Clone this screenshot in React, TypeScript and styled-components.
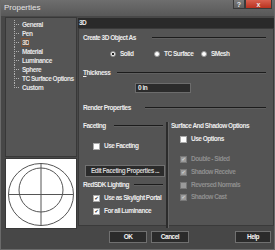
import React from 'react';
import styled, { createGlobalStyle } from 'styled-components';

const GlobalStyle = createGlobalStyle`
  html, body {
    margin: 0;
    padding: 0;
    background: #474747;
  }
  body {
    font-family: "Liberation Sans", Arial, sans-serif;
  }
  * { box-sizing: border-box; }
`;

const treeItems = [
  'General',
  'Pen',
  '3D',
  'Material',
  'Luminance',
  'Sphere',
  'TC Surface Options',
  'Custom',
];

const shadowOptions = [
  { label: 'Double - Sided', checked: true, top: 12 },
  { label: 'Shadow Receive', checked: true, top: 5 },
  { label: 'Reversed Normals', checked: false, top: 5 },
  { label: 'Shadow Cast', checked: true, top: 4 },
];

function App() {
  return (
    <Window>
      <GlobalStyle />
      <TitleBar>
        <TitleText>Properties</TitleText>
        <CaptionButtons>
          <CaptionButton>?</CaptionButton>
          <CaptionButton $close>x</CaptionButton>
        </CaptionButtons>
      </TitleBar>

      <Body>
        <Sidebar>
          <TreePanel>
            <TreeList>
              {treeItems.map((item, i) => (
                <TreeItem key={item} $last={i === treeItems.length - 1}>
                  <TreeLabel $selected={item === '3D'}>{item}</TreeLabel>
                </TreeItem>
              ))}
            </TreeList>
          </TreePanel>
          <Preview>
            <svg width="70" height="70" viewBox="0 0 70 70">
              <g fill="none" stroke="#555" strokeWidth="1">
                <ellipse cx="35" cy="35.5" rx="32.5" ry="31" />
                <ellipse cx="35" cy="31" rx="22" ry="22" />
                <line x1="35" y1="4" x2="35" y2="67" />
                <line x1="2.5" y1="35.5" x2="67.5" y2="35.5" />
              </g>
            </svg>
          </Preview>
        </Sidebar>

        <Main>
          <PageHeader>3D</PageHeader>
          <Content>
            <GroupHeader $top={5} $gap={16}>
              <span>Create 3D Object As</span>
              <Rule />
            </GroupHeader>
            <RadioRow>
              <RadioOption $width={44}>
                <RadioDot $checked />
                Solid
              </RadioOption>
              <RadioOption $width={47}>
                <RadioDot />
                TC Surface
              </RadioOption>
              <RadioOption $width={40}>
                <RadioDot />
                SMesh
              </RadioOption>
            </RadioRow>

            <GroupHeader $top={11} $gap={7}>
              <span>
                <u>T</u>hickness
              </span>
              <Rule />
            </GroupHeader>
            <InputBox>0 in</InputBox>

            <GroupHeader $top={11} $gap={14}>
              <span>Render Properties</span>
              <Rule />
            </GroupHeader>

            <Columns>
              <Column $width={83}>
                <GroupHeader $top={0} $gap={8}>
                  <span>Faceting</span>
                  <Rule />
                </GroupHeader>
                <CheckRow $top={12} $indent={10}>
                  <CheckBox />
                  Use Faceting
                </CheckRow>
                <PushButton $width={80} $top={15}>
                  Edit Faceting Properties ...
                </PushButton>
                <GroupHeader $top={4} $gap={5}>
                  <span>RedSDK Lighting</span>
                  <Rule />
                </GroupHeader>
                <CheckRow $top={5} $indent={10}>
                  <CheckBox $checked>✔</CheckBox>
                  Use as Skylight Portal
                </CheckRow>
                <CheckRow $top={5} $indent={10}>
                  <CheckBox $checked>✔</CheckBox>
                  For all Luminance
                </CheckRow>
              </Column>
              <VSeparator />
              <Column $width={98}>
                <GroupHeader $top={0} $gap={0}>
                  <span>Surface And Shadow Options</span>
                </GroupHeader>
                <CheckRow $top={5} $indent={9}>
                  <CheckBox />
                  Use Options
                </CheckRow>
                {shadowOptions.map((opt) => (
                  <CheckRow key={opt.label} $top={opt.top} $indent={9} $disabled>
                    <CheckBox $checked={opt.checked} $disabled>
                      {opt.checked ? '✔' : ''}
                    </CheckBox>
                    {opt.label}
                  </CheckRow>
                ))}
              </Column>
            </Columns>
          </Content>
        </Main>
      </Body>

      <Footer>
        <PushButton $width={38} $bold>OK</PushButton>
        <PushButton $width={38} $bold>Cancel</PushButton>
        <Spacer />
        <PushButton $width={36} $bold>Help</PushButton>
      </Footer>
    </Window>
  );
}

const Window = styled.div`
  width: 275px;
  height: 250px;
  background: #474747;
  display: flex;
  flex-direction: column;
  border-left: 1px solid #6a6a6a;
  border-right: 1px solid #6a6a6a;
  border-bottom: 1px solid #6a6a6a;
  overflow: hidden;
  font-size: 6.5px;
  font-weight: bold;
  letter-spacing: -0.5px;
  color: #ececec;
`;

const TitleBar = styled.div`
  height: 16px;
  display: flex;
  justify-content: space-between;
  align-items: flex-start;
  background: linear-gradient(#6e6e6e, #585858);
`;

const TitleText = styled.div`
  font-size: 8px;
  font-weight: normal;
  letter-spacing: 0;
  color: #e4e4e4;
  padding: 3px 0 0 3px;
`;

const CaptionButtons = styled.div`
  display: flex;
  margin-right: 2px;
`;

const CaptionButton = styled.div<{ $close?: boolean }>`
  width: ${(p) => (p.$close ? 27 : 12)}px;
  height: 9px;
  font-size: 7px;
  line-height: 9px;
  letter-spacing: 0;
  text-align: center;
  color: #e8e8e8;
  background: ${(p) =>
    p.$close ? 'linear-gradient(#d9604f, #b8321f)' : 'linear-gradient(#7c7c7c, #5e5e5e)'};
  border: 1px solid #3a3a3a;
  border-top: none;
`;

const Body = styled.div`
  display: flex;
  gap: 1px;
  padding: 1px 3px 0 4px;
`;

const Sidebar = styled.div`
  width: 73px;
  display: flex;
  flex-direction: column;
  gap: 1px;
`;

const TreePanel = styled.div`
  height: 140px;
  background: #555;
  border: 1px solid #383838;
  padding: 2px 0 0 8px;
`;

const TreeList = styled.ul`
  list-style: none;
  margin: 0;
  padding: 0;
`;

const TreeItem = styled.li<{ $last?: boolean }>`
  position: relative;
  height: 9px;
  line-height: 9px;
  padding-left: 7px;
  white-space: nowrap;
  &::before {
    content: '';
    position: absolute;
    left: 0;
    top: 4px;
    width: 5px;
    border-top: 1px dotted #b0b0b0;
  }
  &::after {
    content: '';
    position: absolute;
    left: 0;
    top: 0;
    height: ${(p) => (p.$last ? '5px' : '9px')};
    border-left: 1px dotted #b0b0b0;
  }
`;

const TreeLabel = styled.span<{ $selected?: boolean }>`
  display: inline-block;
  vertical-align: top;
  line-height: 9px;
  color: ${(p) => (p.$selected ? '#f0dcc8' : '#e6e6e6')};
  padding: 0 1px;
  outline: ${(p) => (p.$selected ? '1px solid #7a5236' : 'none')};
  outline-offset: -1px;
`;

const Preview = styled.div`
  height: 71px;
  background: #fff;
  border: 1px solid #383838;
  display: flex;
  align-items: center;
  justify-content: center;
`;

const Main = styled.div`
  flex: 1;
  display: flex;
  flex-direction: column;
  padding-top: 1px;
`;

const PageHeader = styled.div`
  height: 10px;
  background: #2a2a2a;
  line-height: 10px;
  padding-left: 1px;
`;

const Content = styled.div`
  height: 198px;
  background: #545454;
  border: 1px solid #3a3a3a;
  padding: 0 4px 0 4px;
`;

const GroupHeader = styled.div<{ $top: number; $gap: number }>`
  display: flex;
  align-items: center;
  gap: ${(p) => p.$gap}px;
  height: 8px;
  line-height: 8px;
  margin-top: ${(p) => p.$top}px;
  white-space: nowrap;
`;

const Rule = styled.div`
  flex: 1;
  height: 2px;
  border-top: 1px solid #1c1c1c;
  border-bottom: 1px solid #606060;
  margin-right: 3px;
`;

const RadioRow = styled.div`
  display: flex;
  margin: 8px 0 0 27px;
  height: 8px;
`;

const RadioOption = styled.div<{ $width: number }>`
  width: ${(p) => p.$width}px;
  display: flex;
  align-items: center;
  gap: 4px;
  line-height: 8px;
  white-space: nowrap;
`;

const RadioDot = styled.span<{ $checked?: boolean }>`
  width: 6px;
  height: 6px;
  flex: none;
  border-radius: 50%;
  background: ${(p) =>
    p.$checked ? 'radial-gradient(circle, #222 0 1.3px, #fff 1.6px)' : '#fff'};
  border: 1px solid #999;
`;

const InputBox = styled.div`
  width: 56px;
  height: 10px;
  margin: 6px 0 0 52px;
  background: #2b2b2b;
  border: 1px solid #6c6c6c;
  line-height: 8px;
  padding-left: 2px;
`;

const Columns = styled.div`
  display: flex;
  margin-top: 10px;
  height: 106px;
`;

const Column = styled.div<{ $width: number }>`
  width: ${(p) => p.$width}px;
  display: flex;
  flex-direction: column;
  align-items: stretch;
`;

const VSeparator = styled.div`
  width: 3px;
  margin-right: 2px;
  background: #2c2c2c;
  border-right: 1px solid #656565;
`;

const CheckRow = styled.div<{ $top: number; $indent: number; $disabled?: boolean }>`
  display: flex;
  align-items: center;
  gap: 4px;
  height: 8px;
  line-height: 8px;
  margin: ${(p) => p.$top}px 0 0 ${(p) => p.$indent}px;
  color: ${(p) => (p.$disabled ? '#8e8e8e' : '#ececec')};
  white-space: nowrap;
`;

const CheckBox = styled.span<{ $checked?: boolean; $disabled?: boolean }>`
  width: 7px;
  height: 7px;
  flex: none;
  background: ${(p) => (p.$disabled ? '#9a9a9a' : '#fff')};
  border: 1px solid ${(p) => (p.$disabled ? '#777' : '#aaa')};
  color: ${(p) => (p.$disabled ? '#d4d4d4' : '#1a1a1a')};
  font-family: "DejaVu Sans", sans-serif;
  font-size: 5px;
  letter-spacing: 0;
  line-height: 5px;
  text-align: center;
`;

const PushButton = styled.div<{ $width: number; $top?: number; $bold?: boolean }>`
  width: ${(p) => p.$width}px;
  height: 12px;
  margin: ${(p) => p.$top ?? 0}px 0 0 2px;
  background: #2b2b2b;
  border: 1px solid #707070;
  color: ${(p) => (p.$bold ? '#f4f4f4' : '#cfcfcf')};
  line-height: 10px;
  text-align: center;
  white-space: nowrap;
  overflow: hidden;
`;

const Footer = styled.div`
  display: flex;
  gap: 2px;
  margin-top: 2px;
  padding: 0 3px 0 106px;
`;

const Spacer = styled.div`
  flex: 1;
`;

export default App;
